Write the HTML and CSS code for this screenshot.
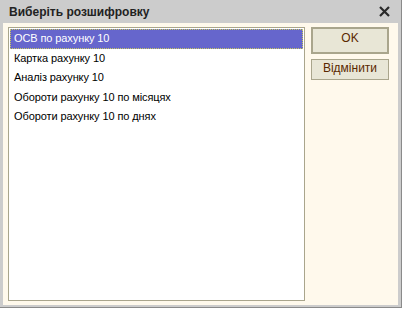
FILE: index.html
```html
<!DOCTYPE html>
<html>
<head>
<meta charset="utf-8">
<link rel="stylesheet" href="styles.css">
</head>
<body>
<div class="window">
  <div class="titlebar">
    <span class="title">Виберіть розшифровку</span>
    <svg class="close" width="11" height="11" viewBox="0 0 11 11"><path d="M1 1 L10 10 M10 1 L1 10" stroke="#2a2a2a" stroke-width="2.2" fill="none"/></svg>
  </div>
  <div class="body">
    <div class="list">
      <div class="item selected">ОСВ по рахунку 10</div>
      <div class="item">Картка рахунку 10</div>
      <div class="item">Аналіз рахунку 10</div>
      <div class="item">Обороти рахунку 10 по місяцях</div>
      <div class="item">Обороти рахунку 10 по днях</div>
    </div>
    <div class="buttons">
      <div class="btn default">OK</div>
      <div class="btn">Відмінити</div>
    </div>
  </div>
</div>
</body>
</html>
```
FILE: styles.css
```css
html, body { margin: 0; padding: 0; background: #ffffff; }
body { font-family: "Liberation Sans", Arial, sans-serif; font-size: 11px; }
.window {
  width: 395px;
  height: 303px;
  padding: 0 3px 4px 3px;
  background: #cccccc;
  border-right: 1px solid #8a8a8a;
  border-bottom: 1px solid #8a8a8a;
  display: flex;
  flex-direction: column;
}
.titlebar {
  height: 23px;
  flex: none;
  display: flex;
  align-items: center;
  justify-content: space-between;
  padding: 0 8px 0 6px;
}
.title { font-weight: bold; font-size: 12px; color: #222; }
.close { display: block; }
.body {
  flex: 1;
  background: #fff9ec;
  display: flex;
  padding: 4px 6px 4px 5px;
  gap: 6px;
}
.list {
  width: 293px;
  height: 270px;
  border: 1px solid #a9a58c;
  background: #fff;
  padding: 1px;
}
.item {
  height: 19.5px;
  line-height: 19.5px;
  padding-left: 4px;
  color: #000;
  white-space: nowrap;
  letter-spacing: -0.1px;
}
.item.selected {
  background: #6666cc;
  color: #fff;
  outline: 1px dotted #c8c860;
  outline-offset: -1px;
}
.buttons { display: flex; flex-direction: column; gap: 5px; width: 78px; }
.btn {
  height: 19px;
  line-height: 17px;
  text-align: center;
  background: #e8e6d6;
  border: 1px solid #a9a58c;
  color: #5a2800;
  font-size: 12px;
}
.btn.default { height: 23px; line-height: 19px; border-width: 2px; }
```
